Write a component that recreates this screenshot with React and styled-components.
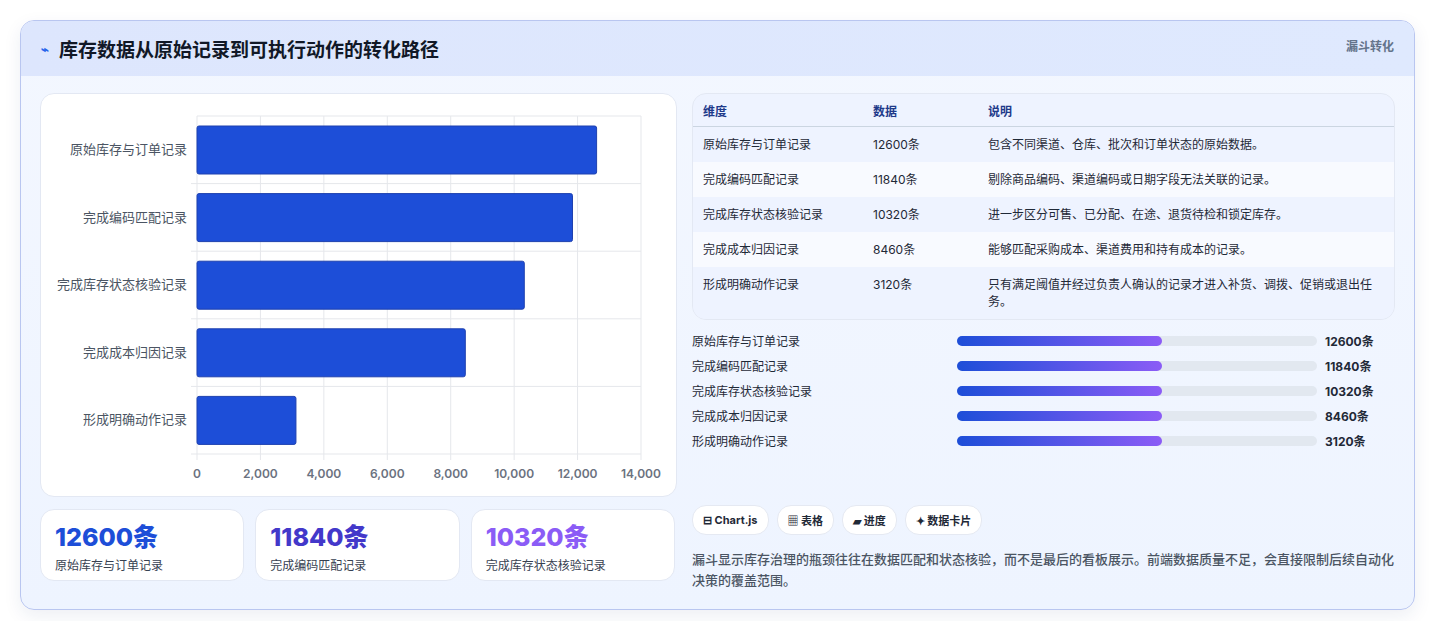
import React from 'react'
import styled, { createGlobalStyle } from 'styled-components'

const Global = createGlobalStyle`
  body { margin: 0; background: #fff; font-family: Inter, "Noto Sans CJK SC", sans-serif; }
`

const rows = [
  { name: '原始库存与订单记录', value: 12600, note: '包含不同渠道、仓库、批次和订单状态的原始数据。' },
  { name: '完成编码匹配记录', value: 11840, note: '剔除商品编码、渠道编码或日期字段无法关联的记录。' },
  { name: '完成库存状态核验记录', value: 10320, note: '进一步区分可售、已分配、在途、退货待检和锁定库存。' },
  { name: '完成成本归因记录', value: 8460, note: '能够匹配采购成本、渠道费用和持有成本的记录。' },
  { name: '形成明确动作记录', value: 3120, note: '只有满足阈值并经过负责人确认的记录才进入补货、调拨、促销或退出任务。' },
]

const Page = styled.div`
  padding: 20px 20px 20px 20px;
`
const Card = styled.div`
  border: 1px solid #b9c6f0;
  border-radius: 14px;
  background: linear-gradient(180deg, #f3f7ff, #eef4ff);
  overflow: hidden;
  box-shadow: 0 6px 18px rgba(30, 50, 120, 0.08);
`
const Header = styled.div`
  height: 55px;
  display: flex;
  align-items: center;
  justify-content: space-between;
  padding: 0 20px 0 20px;
  background: linear-gradient(90deg, #dde6fd, #dfe9fe);
`
const Title = styled.h1`
  margin: 0;
  font-size: 19px;
  font-weight: 700;
  color: #111827;
  display: flex;
  align-items: center;
  gap: 10px;
`
const Tag = styled.span`
  font-size: 12px;
  font-weight: 700;
  color: #64748b;
  align-self: flex-start;
  margin-top: 16px;
`
const Body = styled.div`
  display: grid;
  grid-template-columns: 637px 1fr;
  gap: 15px;
  padding: 17px 19px 18px 19px;
`
const Col = styled.div`
  display: flex;
  flex-direction: column;
  gap: 12px;
`
const Panel = styled.div`
  background: #fff;
  border: 1px solid #e3e8f3;
  border-radius: 14px;
`
const ChartBox = styled(Panel)`
  height: 402px;
`
const Stats = styled.div`
  display: grid;
  grid-template-columns: repeat(3, 1fr);
  gap: 11px;
  padding-right: 2px;
`
const Stat = styled(Panel)`
  height: 72px;
  box-sizing: border-box;
  padding: 12px 14px;
  display: flex;
  flex-direction: column;
  gap: 4px;
`
const StatNum = styled.div`
  font-size: 25px;
  font-weight: 800;
  color: ${p => p.$c};
  line-height: 30px;
`
const StatLabel = styled.div`
  font-size: 12px;
  color: #374151;
`
const Table = styled.table`
  width: 100%;
  border-collapse: collapse;
  font-size: 12px;
  color: #1f2937;
  th { text-align: left; font-weight: 700; color: #1e3a8a; height: 32px; padding: 0 10px; border-bottom: 1px solid #cbd5e1; }
  td { padding: 9px 10px; line-height: 17px; vertical-align: top; }
  tr:nth-child(odd) td { background: #eef3ff; }
  tr:nth-child(even) td { background: #f8faff; }
`
const TableBox = styled(Panel)`
  overflow: hidden;
  background: #eef3ff;
`
const Bars = styled.div`
  display: flex;
  flex-direction: column;
  gap: 8px;
  margin-top: 0px;
`
const BarRow = styled.div`
  display: grid;
  grid-template-columns: 265px 368px 1fr;
  align-items: center;
  font-size: 12px;
  height: 17px;
  color: #1f2937;
  b { font-weight: 700; padding-left: 0; }
`
const Track = styled.div`
  height: 10px;
  border-radius: 5px;
  background: #e2e8f0;
  margin-right: 8px;
`
const Fill = styled.div`
  height: 100%;
  border-radius: 5px;
  background: linear-gradient(90deg, #1d4ed8, #8b5cf6);
`
const Chips = styled.div`
  display: flex;
  gap: 8px;
  margin-top: 44px;
`
const Chip = styled.span`
  height: 28px;
  padding: 0 10px;
  border-radius: 14px;
  background: #fff;
  border: 1px solid #e5e9f2;
  font-size: 11px;
  font-weight: 700;
  color: #1f2937;
  display: flex;
  align-items: center;
  gap: 4px;
`
const Note = styled.p`
  margin: 2px 0 0;
  font-size: 13px;
  line-height: 21px;
  color: #4b5563;
  font-weight: 500;
`

function Chart() {
  const x0 = 156, x1 = 600, y0 = 22, rh = 67.6
  const w = v => (v / 14000) * (x1 - x0)
  const ticks = [0, 2000, 4000, 6000, 8000, 10000, 12000, 14000]
  return (
    <svg width="637" height="402" style={{ display: 'block' }}>
      {ticks.map(t => (
        <g key={t}>
          <line x1={x0 + w(t)} x2={x0 + w(t)} y1={y0} y2={y0 + rh * 5 + 6} stroke="#e5e7eb" />
          <text x={x0 + w(t)} y={y0 + rh * 5 + 24} fontSize="12" fill="#6b7280" textAnchor="middle" fontWeight="600" fontFamily="Inter">{t.toLocaleString('en-US')}</text>
        </g>
      ))}
      {rows.map((r, i) => (
        <g key={r.name}>
          <line x1={x0 - 6} x2={x1} y1={y0 + rh * (i + 1)} y2={y0 + rh * (i + 1)} stroke="#e5e7eb" />
          <rect x={x0} y={y0 + rh * i + 10} width={w(r.value)} height={48} fill="#1d4ed8" stroke="#1e40af" rx="2" />
          <text x={x0 - 10} y={y0 + rh * i + 38} fontSize="13" fill="#4b5563" textAnchor="end" fontFamily="Inter, 'Noto Sans CJK SC'">{r.name}</text>
        </g>
      ))}
      <line x1={x0} x2={x1} y1={y0} y2={y0} stroke="#e5e7eb" />
    </svg>
  )
}

export default function App() {
  return (
    <Page>
      <Global />
      <Card>
        <Header>
          <Title><span style={{ color: '#2563eb', fontSize: 13 }}>⌁</span>库存数据从原始记录到可执行动作的转化路径</Title>
          <Tag>漏斗转化</Tag>
        </Header>
        <Body>
          <Col>
            <ChartBox><Chart /></ChartBox>
            <Stats>
              <Stat><StatNum $c="#1d4ed8">12600条</StatNum><StatLabel>原始库存与订单记录</StatLabel></Stat>
              <Stat><StatNum $c="#4338ca">11840条</StatNum><StatLabel>完成编码匹配记录</StatLabel></Stat>
              <Stat><StatNum $c="#8b5cf6">10320条</StatNum><StatLabel>完成库存状态核验记录</StatLabel></Stat>
            </Stats>
          </Col>
          <Col>
            <TableBox>
              <Table>
                <thead>
                  <tr><th style={{ width: 150 }}>维度</th><th style={{ width: 95 }}>数据</th><th>说明</th></tr>
                </thead>
                <tbody>
                  {rows.map(r => (
                    <tr key={r.name}><td>{r.name}</td><td>{r.value}条</td><td>{r.note}</td></tr>
                  ))}
                </tbody>
              </Table>
            </TableBox>
            <Bars>
              {rows.map(r => (
                <BarRow key={r.name}>
                  <span>{r.name}</span>
                  <Track><Fill style={{ width: '57%' }} /></Track>
                  <b>{r.value}条</b>
                </BarRow>
              ))}
            </Bars>
            <Chips>
              <Chip>⊟ Chart.js</Chip>
              <Chip>▦ 表格</Chip>
              <Chip>▰ 进度</Chip>
              <Chip>✦ 数据卡片</Chip>
            </Chips>
            <Note>漏斗显示库存治理的瓶颈往往在数据匹配和状态核验，而不是最后的看板展示。前端数据质量不足，会直接限制后续自动化决策的覆盖范围。</Note>
          </Col>
        </Body>
      </Card>
    </Page>
  )
}
